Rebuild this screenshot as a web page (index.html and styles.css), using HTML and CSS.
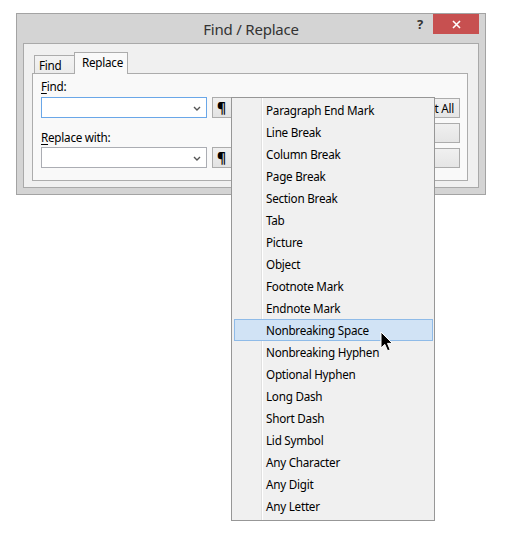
FILE: index.html
```html
<!DOCTYPE html>
<html>
<head>
<meta charset="utf-8">
<link rel="stylesheet" href="styles.css">
</head>
<body>
<div class="window">
  <div class="titlebar">
    <div class="spacer"></div>
    <div class="title">Find / Replace</div>
    <div class="controls">
      <span class="help">?</span>
      <span class="close"><svg width="9" height="9" viewBox="0 0 9 9"><path d="M1 1 L8 8 M8 1 L1 8" stroke="#fff" stroke-width="1.6" fill="none"/></svg></span>
    </div>
  </div>
  <div class="panel">
    <div class="tabs">
      <div class="tab">Find</div>
      <div class="tab active">Replace</div>
    </div>
    <div class="page">
      <div class="fields">
        <div class="label"><u>F</u>ind:</div>
        <div class="row">
          <div class="combo focused"><svg width="8" height="5" viewBox="0 0 8 5"><path d="M1 1 L4 4 L7 1" stroke="#555" stroke-width="1.4" fill="none"/></svg></div>
          <div class="pbtn">¶</div>
        </div>
        <div class="label second"><u>R</u>eplace with:</div>
        <div class="row">
          <div class="combo"><svg width="8" height="5" viewBox="0 0 8 5"><path d="M1 1 L4 4 L7 1" stroke="#555" stroke-width="1.4" fill="none"/></svg></div>
          <div class="pbtn">¶</div>
        </div>
      </div>
      <div class="buttons">
        <div class="btn end">Select All</div>
        <div class="btn">Find Next</div>
        <div class="btn">Replace</div>
      </div>
    </div>
  </div>
</div>

<div class="menu">
  <div class="item">Paragraph End Mark</div>
  <div class="item">Line Break</div>
  <div class="item">Column Break</div>
  <div class="item">Page Break</div>
  <div class="item">Section Break</div>
  <div class="item">Tab</div>
  <div class="item">Picture</div>
  <div class="item">Object</div>
  <div class="item">Footnote Mark</div>
  <div class="item">Endnote Mark</div>
  <div class="item hover">Nonbreaking Space</div>
  <div class="item">Nonbreaking Hyphen</div>
  <div class="item">Optional Hyphen</div>
  <div class="item">Long Dash</div>
  <div class="item">Short Dash</div>
  <div class="item">Lid Symbol</div>
  <div class="item">Any Character</div>
  <div class="item">Any Digit</div>
  <div class="item">Any Letter</div>
</div>

<svg class="cursor" width="14" height="22" viewBox="0 0 14 22"><path d="M1 1 L1 17 L4.8 13.4 L7.6 19.8 L10.2 18.7 L7.5 12.4 L12.4 12.4 Z" fill="#000" stroke="#fff" stroke-width="1" stroke-linejoin="miter"/></svg>
</body>
</html>
```

FILE: styles.css
```css
* { box-sizing: border-box; }
html, body { margin: 0; padding: 0; background: #fff; }
body {
  width: 508px;
  height: 539px;
  position: relative;
  font-family: "Noto Sans", "Open Sans", sans-serif;
  font-size: 11.7px;
  letter-spacing: -0.25px;
  color: #000;
  padding-top: 13px;
  padding-left: 16px;
}

.window {
  width: 470px;
  height: 182px;
  border: 1px solid #a3a3a3;
  background: #d4d4d4;
  display: flex;
  flex-direction: column;
}

.titlebar {
  height: 29px;
  display: grid;
  grid-template-columns: 1fr auto 1fr;
}
.title {
  font-size: 15px;
  letter-spacing: -0.2px;
  line-height: 30px;
  color: #333;
}
.controls {
  justify-self: end;
  display: flex;
  align-items: flex-start;
  margin-right: 6px;
}
.help {
  width: 20px;
  height: 20px;
  line-height: 20px;
  text-align: center;
  font-weight: bold;
  font-size: 13px;
  color: #333;
  margin-right: 3px;
}
.close {
  width: 46px;
  height: 20px;
  background: #c75050;
  display: flex;
  align-items: center;
  justify-content: center;
}
.close svg { display: block; }

.panel {
  flex: 1;
  margin: 0 6px 6px 6px;
  border: 1px solid #a9a9a9;
  background: #f0f0f0;
  padding: 8px 10px 6px 8px;
  display: flex;
  flex-direction: column;
}

.tabs {
  height: 21px;
  display: flex;
  align-items: flex-end;
  padding-left: 2px;
  position: relative;
  z-index: 1;
}
.tab {
  height: 18px;
  border: 1px solid #acacac;
  border-bottom: none;
  background: linear-gradient(#f3f3f3, #ebebeb);
  padding: 1px 4px 0 4px;
  line-height: 17px;
  width: 41px;
}
.tab.active {
  width: 54px;
  height: 22px;
  margin-left: -1px;
  margin-bottom: -1px;
  background: #f9f9f9;
  line-height: 19px;
  padding-left: 7px;
  padding-top: 0;
}

.page {
  height: 108px;
  border: 1px solid #acacac;
  background: #f9f9f9;
  display: flex;
  justify-content: space-between;
}

.fields {
  padding: 4px 0 0 8px;
}
.label {
  height: 16px;
  line-height: 16px;
  margin-bottom: 3px;
}
.label u { text-decoration-thickness: 1px; text-underline-offset: 2px; }
.label.second { margin-top: 11px; margin-bottom: 2px; }
.row {
  display: flex;
  height: 21px;
}
.combo {
  width: 166px;
  height: 21px;
  background: #fff;
  border: 1px solid #abadb3;
  display: flex;
  align-items: center;
  justify-content: flex-end;
  padding-right: 5px;
  padding-top: 1px;
}
.combo.focused { border-color: #6aa7e8; }
.combo svg { display: block; }
.pbtn {
  width: 22px;
  height: 21px;
  margin-left: 5px;
  border: 1px solid #acacac;
  background: linear-gradient(#f0f0f0, #e3e3e3);
  font-size: 14px;
  font-weight: bold;
  line-height: 19px;
  padding-left: 4px;
}

.buttons {
  margin-top: 24px;
  margin-right: 7px;
  display: flex;
  flex-direction: column;
  gap: 5px;
}
.btn {
  width: 100px;
  height: 20px;
  border: 1px solid #acacac;
  background: linear-gradient(#f0f0f0, #e5e5e5);
  line-height: 18px;
  padding-left: 8px;
}
.btn.end {
  text-align: right;
  padding-right: 5px;
  padding-left: 0;
}

.menu {
  position: absolute;
  left: 231px;
  top: 97px;
  width: 204px;
  height: 424px;
  border: 1px solid #979797;
  padding: 1px 1px 3px 2px;
  background:
    linear-gradient(to right, transparent 29px, #e0e0e0 29px, #e0e0e0 30px, #fff 30px, #fff 31px, transparent 31px) no-repeat,
    #f0f0f0;
  background-origin: padding-box;
  z-index: 5;
}
.item {
  height: 22px;
  line-height: 20px;
  padding-top: 1px;
  border: 1px solid transparent;
  border-top-width: 0;
  padding-left: 31px;
  white-space: nowrap;
}
.item.hover {
  background: #d1e3f5;
  border: 1px solid #8fbbe8;
  padding-top: 0;
}

.cursor {
  position: absolute;
  left: 380px;
  top: 331px;
  z-index: 10;
}
```
